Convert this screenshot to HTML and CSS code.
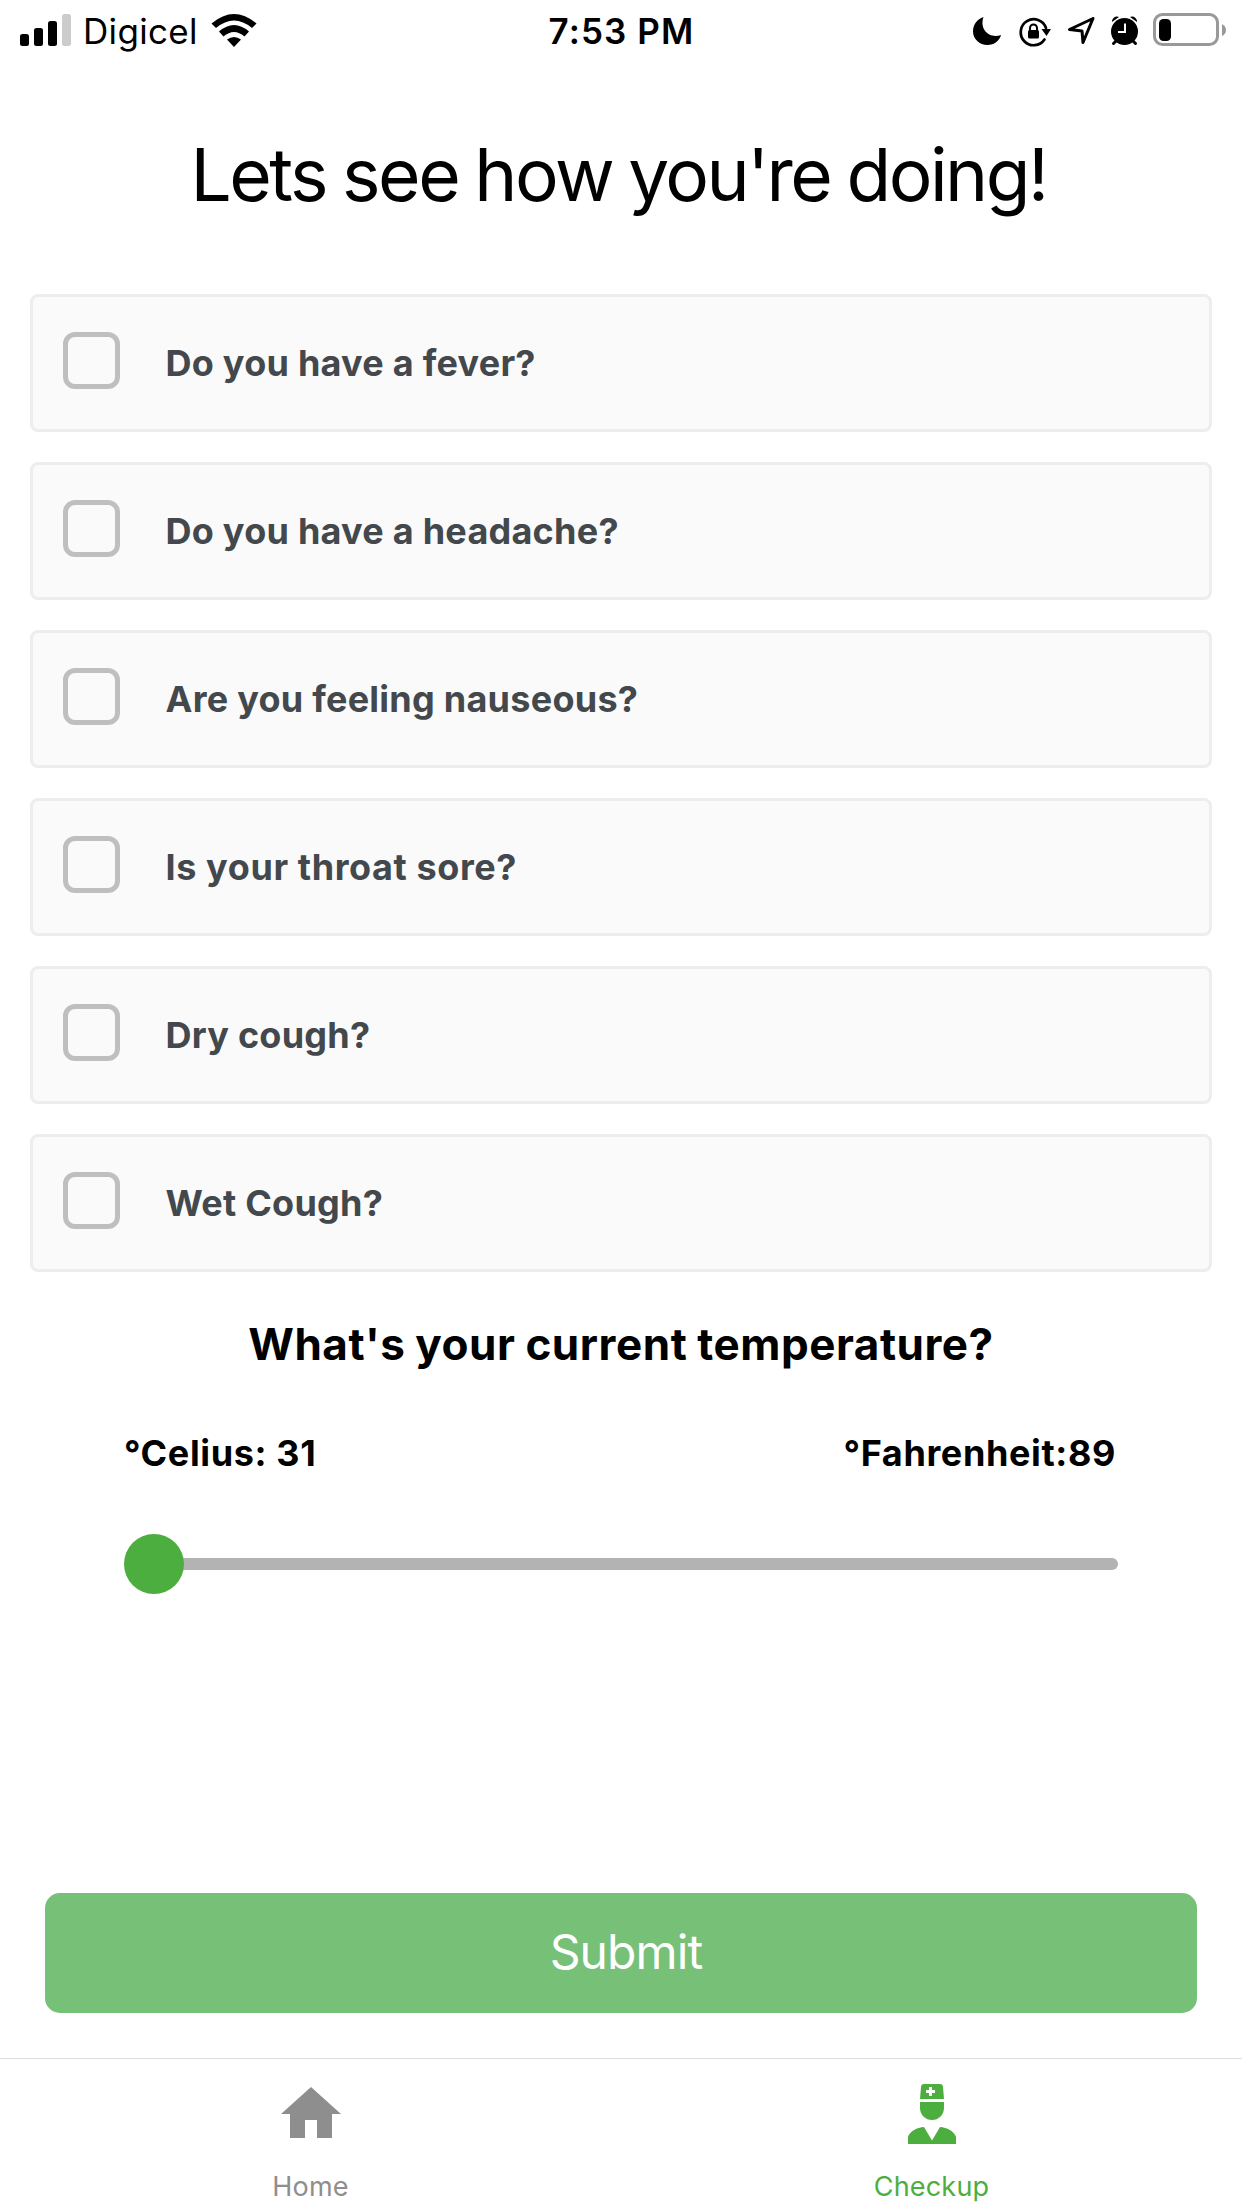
FILE: index.html
```html
<!DOCTYPE html>
<html lang="en">
<head>
<meta charset="utf-8">
<title>Checkup</title>
<link rel="stylesheet" href="styles.css">
</head>
<body>
<header class="status">
  <div class="status-left">
    <svg width="51" height="32" viewBox="0 0 51 32"><rect y="20" width="9" height="12" rx="2.5"/><rect x="14" y="14" width="9" height="18" rx="2.5"/><rect x="28" y="7" width="9" height="25" rx="2.5"/><rect x="42" width="9" height="32" rx="2.5" fill="#cccccc"/></svg>
    <span class="carrier">Digicel</span>
    <svg width="46" height="33" viewBox="0 0 46 33"><path d="M0.5 9.500Q23-9.500 45.500 9.500L41 14Q23-1 5 14Z"/><path d="M8 17.500Q23 4.500 38 17.500L33.500 22.500Q23 13.500 12.500 22.500Z"/><path d="M16 25.500Q23 20.500 30 25.500L23 33Z"/></svg>
  </div>
  <span class="clock">7:53 PM</span>
  <svg class="status-icons" width="262" height="40" viewBox="964 10 262 40">
    <path d="M983.500 17C977 19 973 25 973 31.500C973 39 979.500 45 987.500 45C994 45 999.500 41 1001 35C990 39 979 30 983.500 17Z"/>
    <g fill="none" stroke="#000" stroke-width="2.700" stroke-linecap="round"><path d="M1044.500 39.500A13 13 0 1 1 1046 28"/><path d="M1030 31V28a3.500 3.500 0 0 1 7 0v3" stroke-width="2"/></g>
    <rect x="1028" y="30" width="11" height="8.500" rx="1.500"/><path d="M1041.500 29h9.500l-4.500 7z"/>
    <path d="M1093 18.500L1069.500 29.500L1082 31L1083 42.500Z" fill="none" stroke="#000" stroke-width="3" stroke-linejoin="round"/>
    <circle cx="1124.500" cy="31.500" r="13.500"/><path d="M1112 22a5 5 0 0 1 7-5zM1130 17a5 5 0 0 1 7 5z"/><path d="M1116 41l-2.500 2.500M1133 41l2.500 2.500" stroke="#000" stroke-width="3" stroke-linecap="round"/><path d="M1125 23.500V32h-7" fill="none" stroke="#fff" stroke-width="2"/>
    <rect x="1154.500" y="14.500" width="63" height="30" rx="8" fill="none" stroke="#999" stroke-width="3"/><rect x="1159" y="19" width="12" height="22" rx="4.500"/><path d="M1222 24q4 2 4 6t-4 6z" fill="#999"/>
  </svg>
</header>
<main>
  <h1 class="title">Lets see how you're doing!</h1>
  <div class="questions">
    <div class="card"><span class="box"></span><span>Do you have a fever?</span></div>
    <div class="card"><span class="box"></span><span>Do you have a headache?</span></div>
    <div class="card"><span class="box"></span><span>Are you feeling nauseous?</span></div>
    <div class="card card-loose"><span class="box"></span><span>Is your throat sore?</span></div>
    <div class="card"><span class="box"></span><span>Dry cough?</span></div>
    <div class="card"><span class="box"></span><span>Wet Cough?</span></div>
  </div>
  <h2 class="subtitle">What's your current temperature?</h2>
  <div class="temps"><span>°Celius: 31</span><span>°Fahrenheit:89</span></div>
  <div class="slider"><span class="thumb"></span><span class="track"></span></div>
  <button class="submit" type="button">Submit</button>
</main>
<nav class="tabs">
  <div class="tab">
    <svg width="60" height="64" viewBox="0 0 60 64"><path fill="#8e8e8e" d="M30 5L60 32H51V56H36V38H24V56H9V32H0Z"/></svg>
    <span>Home</span>
  </div>
  <div class="tab tab-active">
    <svg width="48" height="64" viewBox="0 0 48 64"><g fill="#4cae3f"><path d="M12 17L13 5Q13.200 2 16 2H32Q34.800 2 35 5L36 17Z"/><path d="M12 20H36V26A12 12 0 0 1 12 26Z"/><path d="M0 62V55C2 49 9 45.500 16 45L24 58.500L32 45C39 45.500 46 49 48 55V62Z"/></g><path fill="#fff" d="M21 5h3v3h3v3h-3v3h-3v-3h-3v-3h3z"/></svg>
    <span>Checkup</span>
  </div>
</nav>
</body>
</html>
```
FILE: styles.css
```css
* {
  box-sizing: border-box;
}

body {
  display: flex;
  flex-direction: column;
  margin: 0;
  width: 1242px;
  height: 2208px;
  background: #fff;
  color: #000;
  font-family: Inter, "Liberation Sans", sans-serif;
}

svg {
  display: block;
  flex: none;
}

.status {
  display: grid;
  grid-template-columns: 1fr auto 1fr;
  align-items: center;
  height: 60px;
  padding: 0 16px 0 20px;
  font-size: 35px;
  line-height: 42px;
}

.status-left {
  display: flex;
  align-items: center;
}

.carrier {
  margin: 2px 13px 0 12px;
  letter-spacing: 0.32px;
}

.clock {
  margin-top: 2px;
  font-weight: 600;
  letter-spacing: 1.1px;
  transform: translateX(-1.5px);
}

.status-icons {
  justify-self: end;
}

main {
  display: flex;
  flex: 1;
  flex-direction: column;
}

.title {
  margin: 70px 0 74px;
  padding-right: 5px;
  font-size: 73px;
  line-height: 90px;
  font-weight: 400;
  letter-spacing: -2.5px;
  word-spacing: -2px;
  text-align: center;
}

.questions {
  display: flex;
  flex-direction: column;
  gap: 30px;
  padding: 0 30px;
}

.card {
  display: flex;
  align-items: center;
  gap: 45.5px;
  height: 138px;
  padding-left: 30px;
  border: 3px solid #ededed;
  border-radius: 8px;
  background: #fafafa;
  color: #43484d;
  font-size: 36px;
  font-weight: 700;
  line-height: 44px;
  letter-spacing: 0.25px;
}

.card-loose {
  letter-spacing: 0.6px;
}

.box {
  width: 57px;
  height: 57px;
  margin-bottom: 5px;
  border: 5px solid #bfbfbf;
  border-radius: 12px;
}

.subtitle {
  margin: 44px 0 0;
  font-size: 44px;
  line-height: 56px;
  font-weight: 700;
  letter-spacing: 0.54px;
  word-spacing: -1px;
  text-align: center;
}

.temps {
  display: flex;
  justify-content: space-between;
  margin: 59px 126px 0 124px;
  font-size: 36px;
  line-height: 44px;
  font-weight: 700;
  letter-spacing: 0.63px;
}

.slider {
  display: flex;
  align-items: center;
  height: 60px;
  margin: 59px 124px 0;
}

.thumb {
  width: 60px;
  height: 60px;
  border-radius: 50%;
  background: #4cae3f;
}

.track {
  flex: 1;
  height: 12px;
  margin-left: -4px;
  border-radius: 0 6px 6px 0;
  background: #b3b3b3;
  position: relative;
  z-index: -1;
}

.submit {
  height: 120px;
  margin: auto 45px 45px;
  padding: 0 0 3px 10px;
  border: 0;
  border-radius: 15px;
  background: #77c078;
  color: #fff;
  font: 400 48px/60px Inter, "Liberation Sans", sans-serif;
  letter-spacing: -0.9px;
}

.tabs {
  display: grid;
  grid-template-columns: 1fr 1fr;
  height: 150px;
  border-top: 1px solid #dedede;
}

.tab {
  display: flex;
  flex-direction: column;
  align-items: center;
  padding-top: 23px;
  color: #8e8e8e;
  font-size: 27px;
  line-height: 32px;
  letter-spacing: 0.2px;
}

.tab span {
  margin-top: 25px;
}

.tab-active {
  color: #4cae3f;
}
```
